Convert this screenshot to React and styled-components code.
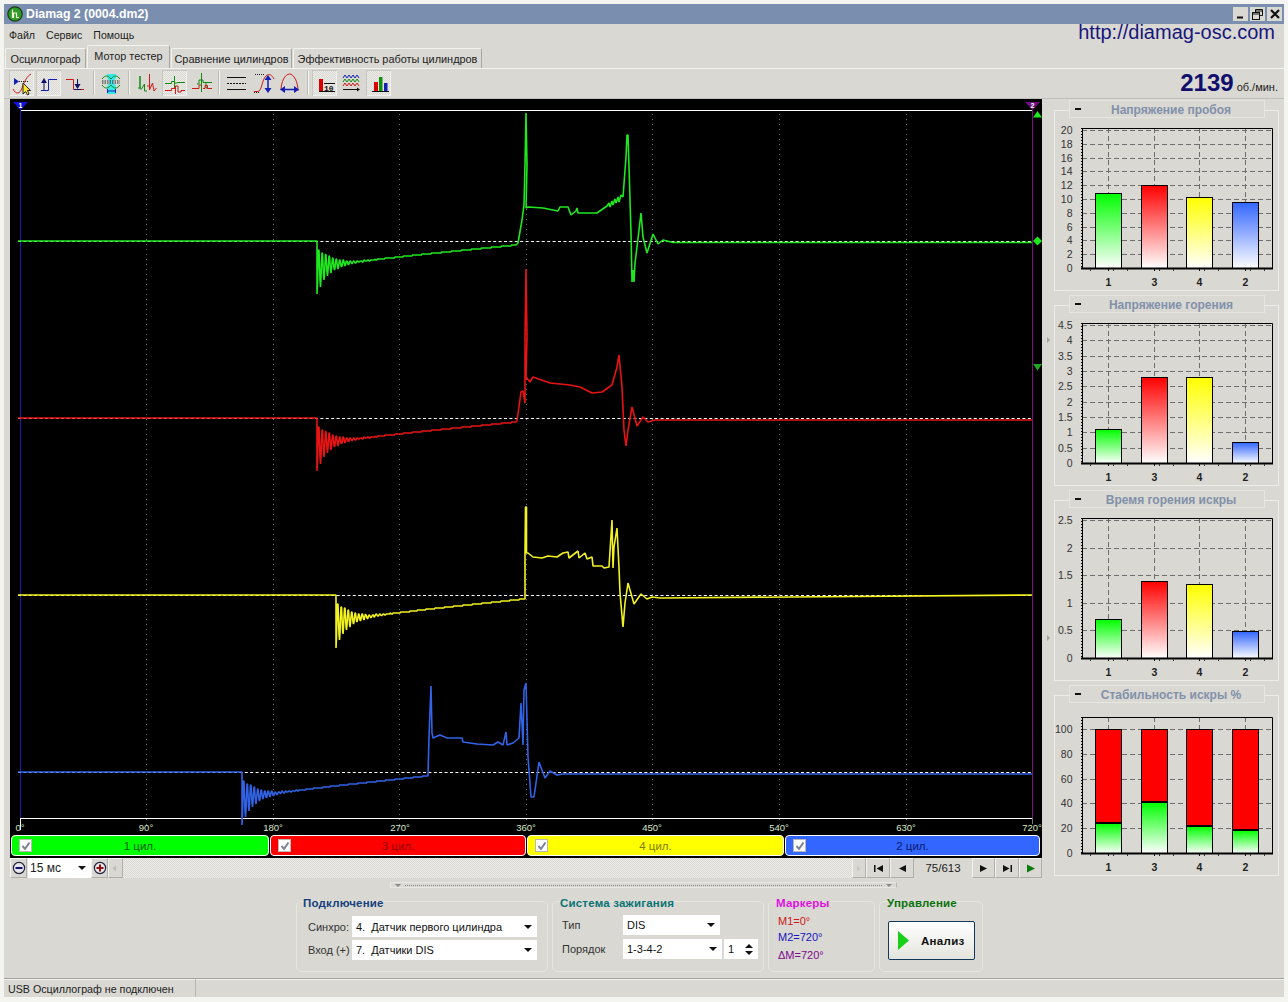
import { useId } from 'react';
import styled, { createGlobalStyle } from 'styled-components';

const GlobalStyle = createGlobalStyle`
  html, body { margin: 0; padding: 0; background: #f4f4f0; }
  body { font-family: "Liberation Sans", Arial, sans-serif; font-size: 11.5px; color: #222; }
`;

const PANEL = '#d9d8d3';

// ---------- data ----------
const CHANNELS = [
  {
    color: '#1fe81f', base: 241, start: 317, riseAt: 516,
    points: [[518,243],[522,220],[524,205],[525,165],[526,113],[527,165],[526,208],[528,207],[543,208],[558,211],[560,207],[568,207],[571,215],[576,211],[577,208],[578,213],[597,213],[607,206],[609,203],[610,207],[612,201],[613,205],[615,199],[616,203],[618,197],[619,202],[621,195],[623,197],[626,157],[627,135],[628,135],[629,167],[631,233],[632,282],[633,270],[634,282],[635,263],[637,247],[641,213],[643,237],[647,253],[653,234],[658,244],[663,240],[673,242.5],[1032,242.5]],
  },
  {
    color: '#e81414', base: 418, start: 317, riseAt: 516,
    points: [[517,421],[521,392],[523,391],[525,403],[525,337],[526,269],[527,337],[526,377],[530,382],[533,377],[550,383],[570,385],[580,387],[592,393],[602,392],[612,385],[617,367],[619,355],[622,387],[624,430],[626,446],[628,430],[632,407],[637,426],[643,417],[648,422],[655,420],[667,420],[1032,420]],
  },
  {
    color: '#f2f220', base: 595, start: 336, riseAt: 524,
    points: [[525,599],[525,553],[525.5,507],[526.5,507],[526.5,553],[528,553],[533,557],[542,558],[548,556],[557,557],[563,553],[568,552],[569,558],[578,551],[579,558],[585,553],[587,559],[592,557],[593,566],[602,566],[604,568],[609,567],[612,520],[613,568],[614,547],[617,528],[619,568],[620,593],[623,627],[625,603],[628,583],[634,604],[641,594],[647,599],[652,597],[660,598],[1032,595]],
  },
  {
    color: '#3263e6', base: 772, start: 242, riseAt: 427,
    points: [[428,776],[429,737],[431,686],[432,733],[433,738],[440,735],[447,738],[462,738],[463,742],[477,744],[493,745],[498,742],[503,745],[506,732],[507,745],[513,743],[519,738],[521,703],[523,745],[524,690],[526,683],[528,757],[531,797],[534,797],[539,762],[545,778],[550,771],[557,775],[563,774],[590,774],[1032,774]],
  },
];

const GRID_X = [146, 273, 399, 526, 652, 779, 906];
const DEGREES = [[20,'0°'],[146,'90°'],[273,'180°'],[400,'270°'],[526,'360°'],[652,'450°'],[779,'540°'],[906,'630°'],[1032,'720°']];

const CYLINDERS = [
  { label: '1 цил.', bg: '#00ff00', fg: '#0c5a0c', width: 259 },
  { label: '3 цил.', bg: '#ff0000', fg: '#960000', width: 257 },
  { label: '4 цил.', bg: '#ffff00', fg: '#7c7c00', width: 258 },
  { label: '2 цил.', bg: '#3366ff', fg: '#0a1a70', width: 256 },
];

const BAR_X = [41, 87, 132, 178];
const BAR_NAMES = ['1', '3', '4', '2'];
const BAR_COLORS = ['#00ff00', '#ff0000', '#ffff00', '#3366ff'];

const CHARTS = [
  { title: 'Напряжение пробоя', ticks: [0,2,4,6,8,10,12,14,16,18,20], top: 30, frameTop: 28, values: [10.9,12,10.3,9.5] },
  { title: 'Напряжение горения', ticks: [0,0.5,1,1.5,2,2.5,3,3.5,4,4.5], top: 30, frameTop: 28, values: [1.1,2.8,2.8,0.68] },
  { title: 'Время горения искры', ticks: [0,0.5,1,1.5,2,2.5], top: 30, frameTop: 28, values: [0.7,1.4,1.34,0.49] },
  { title: 'Стабильность искры %', ticks: [0,20,40,60,80,100], top: 44, frameTop: 32, values: [24,41,22,18.5], stacked: true },
];

// ---------- trace helpers ----------
const lerpOffset = (f) => {
  const keys = [[0,29],[0.05,24],[0.19,21],[0.5,14],[1,4]];
  for (let i = 1; i < keys.length; i++) {
    if (f <= keys[i][0]) {
      const [a, va] = keys[i - 1];
      const [b, vb] = keys[i];
      return va + ((f - a) / (b - a)) * (vb - va);
    }
  }
  return 4;
};

const tracePath = ({ base, start, riseAt, points }) => {
  let d = `M18 ${base} L${start} ${base}`;
  const len = riseAt - start;
  for (let t = 0; t <= len; t += 0.5) {
    const center = base + lerpOffset(t / len);
    const y = center + 24 * Math.exp(-t / 13) * Math.cos((2 * Math.PI * t) / 3.5);
    d += ` L${start + t} ${Math.round(y)}`;
  }
  points.forEach(([x, y]) => { d += ` L${x} ${y}`; });
  return d;
};

// ---------- layout ----------
const Window = styled.div`
  margin: 4px 0 0 4px;
  width: 1280px;
  height: 993px;
  background: ${PANEL};
  display: flex;
  flex-direction: column;
  overflow: hidden;
`;

const TitleBar = styled.div`
  height: 20px;
  flex: none;
  background: #7a8eb0;
  display: flex;
  align-items: center;
  padding: 0 2px 0 3px;
`;

const TitleText = styled.div`
  margin-left: 3px;
  flex: 1;
  color: #fff;
  font-weight: bold;
  font-size: 12.3px;
`;

const WinButton = styled.button`
  width: 15px;
  height: 14px;
  margin-left: 2px;
  padding: 0;
  border: none;
  background: #d9d8d3;
  display: flex;
  align-items: center;
  justify-content: center;
`;

const MenuBar = styled.div`
  height: 21px;
  flex: none;
  display: flex;
  align-items: center;
  padding-left: 5px;
  gap: 11px;
  position: relative;
`;

const MenuItem = styled.span`
  font-size: 10.6px;
  color: #222;
`;

const SiteLink = styled.div`
  margin-left: auto;
  margin-right: 9px;
  margin-top: -4px;
  font-size: 20px;
  color: #17177c;
`;

const TabRow = styled.div`
  height: 23px;
  flex: none;
  display: flex;
  align-items: flex-end;
  padding-left: 1px;
`;

const Tab = styled.div`
  height: ${(p) => (p.$active ? 23 : 20)}px;
  width: ${(p) => p.$width}px;
  box-sizing: border-box;
  margin-right: 1px;
  border-top: 1px solid #f2f2ee;
  border-left: 1px solid #f2f2ee;
  border-right: 1px solid #a8a8a2;
  border-radius: 2px 2px 0 0;
  display: flex;
  align-items: center;
  justify-content: center;
  font-size: 10.9px;
  padding-bottom: ${(p) => (p.$active ? 3 : 0)}px;
  color: #222;
`;

const Toolbar = styled.div`
  height: 31px;
  flex: none;
  box-sizing: border-box;
  border-top: 1px solid #f2f2ee;
  border-bottom: 1px solid #c0c0ba;
  display: flex;
  align-items: center;
  padding: 0 0 1px 5px;
`;

const ToolButton = styled.div`
  width: 25px;
  height: 26px;
  margin-right: 2px;
  flex: none;
  background: ${(p) => (p.$pressed ? 'repeating-conic-gradient(#ecece8 0 25%, #d9d8d3 0 50%) 0 0 / 2px 2px' : 'transparent')};
  box-shadow: ${(p) => (p.$pressed ? 'inset 1px 1px 0 #c8c8c2, inset -1px -1px 0 #f0f0ec' : 'none')};
`;

const ToolSep = styled.div`
  width: 2px;
  height: 24px;
  margin: 0 ${(p) => p.$after || 4}px 0 ${(p) => p.$before || 4}px;
  background: linear-gradient(to right, #bcbcb6 50%, #f4f4f0 50%);
  flex: none;
`;

const Rpm = styled.div`
  margin-left: auto;
  margin-right: 6px;
  display: flex;
  align-items: baseline;
  gap: 3px;
`;

const RpmValue = styled.span`
  font-size: 24px;
  font-weight: bold;
  color: #10106c;
`;

const RpmUnit = styled.span`
  font-size: 11px;
  color: #222;
`;

const Main = styled.div`
  flex: none;
  height: 781px;
  display: flex;
  padding-left: 6px;
  align-items: flex-start;
`;

const LeftColumn = styled.div`
  width: 1032px;
  flex: none;
`;

const ScopeBox = styled.div`
  background: #000;
  height: 759px;
  display: flex;
  flex-direction: column;
`;

const ScopeSvg = styled.svg`
  display: block;
  flex: none;
  font-family: "Liberation Sans", Arial, sans-serif;
`;

const Legend = styled.div`
  display: flex;
  padding-left: 1px;
  height: 21px;
`;

const LegendBar = styled.div`
  width: ${(p) => p.$width - 1}px;
  margin-right: 1px;
  box-sizing: border-box;
  background: ${(p) => p.$bg};
  color: ${(p) => p.$fg};
  border: 1px solid #fff;
  border-radius: 4px;
  display: flex;
  align-items: center;
  padding-left: 7px;
  font-size: 11.5px;
`;

const CheckBox = styled.div`
  width: 13px;
  height: 13px;
  flex: none;
  background: #fff;
  border: 1px solid #b8b8b8;
  box-sizing: border-box;
  display: flex;
  align-items: center;
  justify-content: center;
`;

const LegendLabel = styled.span`
  flex: 1;
  text-align: center;
  padding-right: 20px;
`;

const ControlRow = styled.div`
  height: 20px;
  display: flex;
  align-items: stretch;
  background: repeating-conic-gradient(#ecece8 0 25%, #d9d8d3 0 50%) 0 0 / 2px 2px;
`;

const NavButton = styled.div`
  width: ${(p) => p.$width}px;
  margin-left: ${(p) => p.$gap || 0}px;
  flex: none;
  box-sizing: border-box;
  background: ${PANEL};
  border-top: 1px solid #f2f2ee;
  border-left: 1px solid #f2f2ee;
  border-right: 1px solid #b0b0aa;
  border-bottom: 1px solid #b0b0aa;
  display: flex;
  align-items: center;
  justify-content: center;
`;

const Hatch = styled.div`
  flex: 1;
`;

const ZoomCombo = styled.div`
  width: 63px;
  margin-left: 1px;
  background: #fff;
  display: flex;
  align-items: center;
  justify-content: space-between;
  padding: 0 5px 0 2px;
  box-sizing: border-box;
  font-size: 12px;
`;

const Counter = styled.div`
  width: 58px;
  background: ${PANEL};
  display: flex;
  align-items: center;
  justify-content: center;
  font-size: 11.5px;
`;

const Arrow = styled.i`
  display: block;
  width: 0;
  height: 0;
  border-left: 4px solid transparent;
  border-right: 4px solid transparent;
  border-top: 4px solid #111;
`;

const Gripper = styled.div`
  width: 12px;
  flex: none;
  align-self: stretch;
  display: flex;
  flex-direction: column;
  align-items: center;
  padding-top: 238px;
  gap: 292px;
`;

const GripMark = styled.i`
  display: block;
  width: 0;
  height: 0;
  border-top: 3px solid transparent;
  border-bottom: 3px solid transparent;
  border-left: 3px solid #a4a4a0;
`;

const RightColumn = styled.div`
  width: 225px;
  flex: none;
  padding-top: 1px;
`;

const ChartPanel = styled.div`
  height: 195px;
  box-sizing: border-box;
  display: flex;
  flex-direction: column;
`;

const ChartHeader = styled.div`
  width: 196px;
  height: 18px;
  margin: 0 auto;
  box-sizing: border-box;
  background: ${PANEL};
  border: 1px solid #e6e6e1;
  position: relative;
  z-index: 1;
  flex: none;
  display: flex;
  align-items: center;
  padding-left: 5px;
`;

const Collapse = styled.i`
  display: block;
  width: 6px;
  height: 2px;
  background: #111;
  flex: none;
`;

const ChartTitle = styled.span`
  flex: 1;
  text-align: center;
  font-size: 12px;
  font-weight: bold;
  color: #8291aa;
  padding: 1px 2px 0 0;
`;

const ChartFrame = styled.div`
  margin-top: -8px;
  height: 181px;
  box-sizing: border-box;
  border: 1px solid #ecece8;
  padding-top: 9px;
`;

const ChartSvg = styled.svg`
  display: block;
  font-family: "Liberation Sans", Arial, sans-serif;
`;

const Splitter = styled.div`
  height: 15px;
  flex: none;
  display: flex;
  justify-content: flex-start;
  padding: 2px 0 0 386px;
  box-sizing: border-box;
`;

const SplitterBar = styled.div`
  width: 507px;
  height: 6px;
  box-sizing: border-box;
  border: 1px solid #e8e8e4;
  border-right-color: #b8b8b2;
  display: flex;
  align-items: center;
  gap: 4px;
  padding: 0 4px;
`;

const SplitterDots = styled.i`
  flex: 1;
  display: block;
  border-top: 1px dotted #8a8a86;
`;

const SplitterTip = styled.i`
  display: block;
  width: 0;
  height: 0;
  border-left: 3px solid transparent;
  border-right: 3px solid transparent;
  border-top: 3px solid #888;
`;

const GroupRow = styled.div`
  flex: none;
  height: 83px;
  display: flex;
  gap: 4px;
  padding: 6px 0 0 292px;
  box-sizing: border-box;
`;

const Group = styled.div`
  width: ${(p) => p.$width}px;
  height: 71px;
  flex: none;
  box-sizing: border-box;
  border: 1px solid #e6e6e1;
  border-radius: 5px;
  padding: 0 0 0 ${(p) => p.$pad}px;
`;

const GroupTitle = styled.div`
  margin: -6px 0 0 ${(p) => p.$shift || 0}px;
  height: 14px;
  line-height: 14px;
  font-size: 11.5px;
  font-weight: bold;
  letter-spacing: 0.2px;
  color: ${(p) => p.$color};
`;

const FormRow = styled.div`
  display: flex;
  align-items: center;
  margin-top: ${(p) => p.$top}px;
`;

const FormLabel = styled.span`
  width: ${(p) => p.$width}px;
  margin-left: ${(p) => p.$indent || 0}px;
  flex: none;
  font-size: 11px;
  color: #333;
  white-space: nowrap;
`;

const Combo = styled.div`
  width: ${(p) => p.$width}px;
  height: ${(p) => p.$height || 20}px;
  flex: none;
  box-sizing: border-box;
  background: #fff;
  display: flex;
  align-items: center;
  justify-content: space-between;
  padding: 0 5px 0 4px;
  font-size: 11px;
  color: #111;
  white-space: pre;
`;

const Spinner = styled(Combo)`
  margin-left: 2px;
`;

const SpinArrows = styled.span`
  display: flex;
  flex-direction: column;
  gap: 3px;
`;

const ArrowUp = styled(Arrow)`
  border-top: none;
  border-bottom: 4px solid #111;
`;

const MarkerLine = styled.div`
  margin: ${(p) => p.$top}px 0 0 0;
  height: 13px;
  line-height: 13px;
  font-size: 11px;
  color: ${(p) => p.$color};
`;

const AnalyzeButton = styled.button`
  width: 87px;
  height: 39px;
  margin: 11px 0 0 8px;
  box-sizing: border-box;
  border: 1px solid #14385c;
  border-radius: 2px;
  background: linear-gradient(to bottom, #ffffff, #e4e4de);
  display: flex;
  align-items: center;
  gap: 12px;
  padding: 0 0 0 9px;
  font-family: inherit;
  font-size: 11.5px;
  font-weight: bold;
  letter-spacing: 0.3px;
  color: #111;
`;

const StatusBar = styled.div`
  flex: none;
  height: 19px;
  margin-top: 0;
  border-top: 1px solid #a6a6a0;
  box-shadow: inset 0 1px 0 #f0f0ec;
  display: flex;
  align-items: center;
  padding-left: 4px;
  font-size: 10.7px;
  color: #222;
`;

const StatusCell = styled.div`
  width: 187px;
  height: 100%;
  display: flex;
  align-items: center;
  border-right: 1px solid #b8b8b2;
`;

// ---------- drawings ----------
const AppIcon = () => (
  <svg width="16" height="16" viewBox="0 0 16 16">
    <circle cx="8" cy="8" r="7.2" fill="#2f9a2a" stroke="#173a14" strokeWidth="1.2" />
    <path d="M5.5 3.5 V11.5 H6.5 V7 H9.5 V11.5 H12" fill="none" stroke="#f4f4d0" strokeWidth="1.2" />
  </svg>
);

const Ico = ({ children }) => (
  <svg width="25" height="26" viewBox="0 0 25 26" fill="none" strokeWidth="1">{children}</svg>
);

const BLUE = '#1420b4';
const NAVY = '#10106c';
const RED = '#d01818';
const GREEN = '#128a12';

const ToolIcons = [
  <Ico key="1">
    <path d="M5 8 L10 11.5 L5 15 Z" fill={BLUE} />
    <path d="M10 11.5 H20" stroke="#222" strokeDasharray="1 1" />
    <path d="M4 19 C7 25 11 24 13 18 C15 12 18 6 22 4" stroke={RED} />
    <path d="M14 13 V24 L16.5 21.5 L18.5 25 L20 24 L18.5 20.5 L21.5 20.5 Z" fill="#ffe820" stroke="#222" />
  </Ico>,
  <Ico key="2">
    <path d="M5 20.5 H12.5 V9.5 H21" stroke={BLUE} />
    <path d="M8 20 V12" stroke={NAVY} />
    <path d="M5 13 L8 8 L11 13 Z" fill={NAVY} />
  </Ico>,
  <Ico key="3">
    <path d="M3 9.5 H10.5 V19.5 H21" stroke={RED} />
    <path d="M14.5 9 V14" stroke={NAVY} />
    <path d="M11.5 14 L14.5 19 L17.5 14 Z" fill={NAVY} />
    <path d="M11 19.5 H18" stroke={NAVY} />
  </Ico>,
  <Ico key="4">
    <path d="M8 4 H17 L17 8 L14 12 L17 16 V24 H8 V16 L11 12 L8 8 Z" fill="#38e8e8" />
    <path d="M3 9 C6 5 9 5 12 9 C15 5 18 5 21 9" stroke={GREEN} />
    <path d="M3 15 C6 19 9 19 12 15 C15 19 18 19 21 15" stroke={GREEN} />
    <path d="M3 11 H21 M3 13 H21" stroke="#222" strokeDasharray="1.5 1" />
    <path d="M8.5 21 H16.5 M8.5 19 V23 M16.5 19 V23" stroke={BLUE} />
  </Ico>,
  <Ico key="5">
    <path d="M3 18 H5 V6 V19 L6.5 19 L9.5 14 V21 H12" stroke={GREEN} />
    <path d="M12 16 H14.5 V4 V20 L17.5 13 L19 21 L21.5 18" stroke={RED} />
  </Ico>,
  <Ico key="6">
    <path d="M3 13.5 H9.5 V11.5 H12.5 V6 V18 V13 H15.5 V12.5 H23" stroke={GREEN} />
    <path d="M3 20.5 H9.5 V18.5 H13.5 V24 V16 H16 V22 H19 V20.5 H23" stroke={RED} />
  </Ico>,
  <Ico key="7">
    <path d="M3 18.5 H10 V15 H12" stroke={RED} />
    <path d="M12.5 3 V22" stroke={GREEN} />
    <path d="M8 14 H10 V10 H14 V12.5 H23 M17 12.5 V18 H19" stroke={GREEN} />
    <path d="M14 18.5 H16 V15.5 H18.5 V18.5 H23" stroke={RED} />
  </Ico>,
  <Ico key="8">
    <path d="M3 7.5 H22 M3 19.5 H22" stroke="#111" />
    <path d="M3 13.5 H22" stroke="#111" strokeDasharray="2 1" />
  </Ico>,
  <Ico key="9">
    <path d="M3 21.5 H7 C11 21 11 9 15 6 C18 3 21 5 23 9" stroke={RED} />
    <path d="M4 4.5 H14 M3 22.5 H9" stroke="#222" strokeDasharray="1 1" />
    <path d="M17 9 V19" stroke={BLUE} strokeWidth="1.5" />
    <path d="M13.5 10 L17 5 L20.5 10 Z M13.5 18 L17 23 L20.5 18 Z" fill={BLUE} />
  </Ico>,
  <Ico key="10">
    <path d="M3 20 C3 12 7 4 11.5 4 C16 4 20 12 20 21" stroke={RED} />
    <path d="M5 19.5 H18" stroke={BLUE} strokeWidth="1.5" />
    <path d="M7 16 L2 19.5 L7 23 Z M16 16 L21 19.5 L16 23 Z" fill={BLUE} />
  </Ico>,
  <Ico key="11">
    <rect x="7" y="9" width="4" height="12" fill="#d80000" />
    <path d="M7 21.5 H23 M12 13.5 H23" stroke="#111" />
    <text x="12" y="20.5" fontSize="8" fontWeight="bold" fill="#111" fontFamily="Liberation Mono, monospace">10</text>
  </Ico>,
  <Ico key="12">
    <path d="M4 8 L6 5 L8 8 L10 5 L12 8 L14 5 L16 8 L18 5 L20 8" stroke={BLUE} />
    <path d="M4 12 L6 9 L8 12 L10 9 L12 12 L14 9 L16 12 L18 9 L20 12" stroke={GREEN} />
    <path d="M4 16 L6 13 L8 16 L10 13 L12 16 L14 13 L16 16 L18 13 L20 16" stroke={RED} />
    <path d="M4 19.5 H18" stroke="#111" />
    <path d="M18 17.5 L21 19.5 L18 21.5 Z" fill="#111" />
  </Ico>,
  <Ico key="13">
    <rect x="8" y="12" width="4" height="9" fill="#d80000" />
    <rect x="13" y="7" width="3.5" height="14" fill="#109010" />
    <rect x="18" y="13" width="3.5" height="8" fill={BLUE} />
    <path d="M6 21.5 H23" stroke="#111" />
  </Ico>,
];

const NavGlyph = ({ kind }) => {
  const paths = {
    first: 'M1 1 H2.5 V8 H1 Z M10 1 V8 L3.5 4.5 Z',
    prev: 'M9 1 V8 L2 4.5 Z',
    next: 'M2 1 V8 L9 4.5 Z',
    last: 'M1 1 V8 L7.5 4.5 Z M8.5 1 H10 V8 H8.5 Z',
    play: 'M2 0.5 V8.5 L10 4.5 Z',
    faint: 'M6 1.5 V7.5 L2.5 4.5 Z',
    faintNext: 'M3 1.5 V7.5 L6.5 4.5 Z',
  };
  const fills = { play: '#0a7a0a', faint: '#bdbdb8', faintNext: '#c8c8c2' };
  return (
    <svg width="11" height="9" viewBox="0 0 11 9">
      <path d={paths[kind]} fill={fills[kind] || '#111'} />
    </svg>
  );
};

const RoundIcon = ({ plus }) => (
  <svg width="14" height="14" viewBox="0 0 14 14">
    <circle cx="7" cy="7" r="5.6" fill="#e6e6ec" stroke="#222238" strokeWidth="1.2" />
    <path d={plus ? 'M3.5 7 H10.5 M7 3.5 V10.5' : 'M3.5 7 H10.5'} stroke={plus ? '#8c1010' : '#10106c'} strokeWidth="2" />
  </svg>
);

const Check = () => (
  <svg width="10" height="10" viewBox="0 0 10 10">
    <path d="M1.5 5 L4 7.8 L8.5 1.5" fill="none" stroke="#7a8496" strokeWidth="2" />
  </svg>
);

const Oscilloscope = () => (
  <ScopeSvg width="1032" height="736" viewBox="10 99 1032 736">
    {GRID_X.map((x) => (
      <path key={x} d={`M${x}.5 114 V826`} stroke="#6c6c6c" strokeDasharray="1 4" />
    ))}
    <path d="M20 110.5 H1032 M20 818.5 H1032" stroke="#fff" strokeWidth="1" />
    <path d="M20.5 102 V818" stroke="#1a1ab4" />
    <path d="M20.5 818 V830" stroke="#fff" />
    <path d="M1032.5 102 V818" stroke="#80107c" />
    <path d="M1032.5 818 V824" stroke="#777" />
    {CHANNELS.map((c) => (
      <g key={c.color}>
        <path d={`M18 ${c.base}.5 H1032`} stroke="#fff" strokeDasharray="3 2.4" />
        <path d={tracePath(c)} fill="none" stroke={c.color} strokeWidth="1.6" strokeLinejoin="bevel" />
      </g>
    ))}
    <path d="M13 102 H28 L20.5 110 Z" fill="#1414d8" />
    <text x="20.5" y="107.5" fontSize="7" fontWeight="bold" fill="#fff" textAnchor="middle">1</text>
    <path d="M1025 102 H1040 L1032.5 110 Z" fill="#70107c" />
    <text x="1032.5" y="107.5" fontSize="7" fontWeight="bold" fill="#fff" textAnchor="middle">2</text>
    <path d="M1037.5 111 L1042 117.5 H1033 Z" fill="#1fe81f" />
    <path d="M1037.5 236.5 L1042 241 L1037.5 245.5 L1033 241 Z" fill="#1fe81f" />
    <path d="M1037.5 370.5 L1042 364 H1033 Z" fill="#1fa81f" />
    {DEGREES.map(([x, label]) => (
      <text key={label} x={x} y="831" fontSize="9.5" fill="#d8e8c8" textAnchor="middle">{label}</text>
    ))}
  </ScopeSvg>
);

const BarChart = ({ ticks, top, frameTop, values, stacked }) => {
  const id = useId();
  const bottom = 168;
  const left = 28;
  const right = 218;
  const scale = (bottom - top) / ticks[ticks.length - 1];
  return (
    <ChartSvg width="223" height="170" viewBox="1 20 223 170">
      <defs>
        {BAR_COLORS.map((c, i) => (
          <linearGradient key={c} id={`${id}-${i}`} x1="0" y1="0" x2="0" y2="1">
            <stop offset="0" stopColor={c} />
            <stop offset="1" stopColor="#fff" />
          </linearGradient>
        ))}
      </defs>
      {ticks.slice(1).map((t) => {
        const y = Math.round(bottom - t * scale) + 0.5;
        return <path key={t} d={`M${left} ${y} H${right}`} stroke="#6e6e6e" strokeDasharray="5 3" />;
      })}
      {BAR_X.map((x) => (
        <path key={x} d={`M${x + 13.5} ${frameTop} V${bottom}`} stroke="#6e6e6e" strokeDasharray="5 3" />
      ))}
      {values.map((v, i) => {
        const x = BAR_X[i];
        const y = Math.round(bottom - v * scale);
        return (
          <g key={BAR_NAMES[i]}>
            {stacked && <rect x={x + 0.5} y={top + 0.5} width="26" height={y - top} fill="#ff0000" stroke="#000" />}
            <rect
              x={x + 0.5}
              y={y + 0.5}
              width="26"
              height={bottom - y}
              fill={`url(#${id}-${stacked ? 0 : i})`}
              stroke="#000"
              strokeWidth="1"
            />
            {stacked && <path d={`M${x} ${y} H${x + 27}`} stroke="#000" strokeWidth="2" />}
            <path d={`M${x + 13.5} ${bottom} v3`} stroke="#111" />
            <text x={x + 13.5} y="186" fontSize="10.5" fontWeight="bold" fill="#222" textAnchor="middle">{BAR_NAMES[i]}</text>
          </g>
        );
      })}
      <path d={`M${left} ${frameTop}.5 H${right}.5 V${bottom}`} fill="none" stroke="#000" />
      <path d={`M${left}.5 ${frameTop} V${bottom}`} stroke="#000" />
      <path d={`M${left - 1}.5 ${frameTop} V${bottom}`} stroke="#000" strokeDasharray="1 2" />
      <path d={`M${left - 1} ${bottom + 0.5} H${right + 1}`} stroke="#000" strokeWidth="2" />
      {[36, 59, 73, 105, 119, 150, 164, 196, 210].map((x) => (
        <path key={x} d={`M${x}.5 ${bottom + 1} v2`} stroke="#333" />
      ))}
      {ticks.map((t) => (
        <text key={t} x="18.5" y={Math.round(bottom - t * scale) + 3.8} fontSize="10.5" fill="#333" textAnchor="end">{t}</text>
      ))}
    </ChartSvg>
  );
};

const App = () => (
  <>
    <GlobalStyle />
    <Window>
      <TitleBar>
        <AppIcon />
        <TitleText>Diamag 2 (0004.dm2)</TitleText>
        <WinButton>
          <svg width="9" height="9" viewBox="0 0 9 9"><path d="M1 7.5 H7" stroke="#111" strokeWidth="2" /></svg>
        </WinButton>
        <WinButton>
          <svg width="11" height="11" viewBox="0 0 11 11" fill="none" stroke="#111">
            <path d="M3.5 3 V0.5 H10.5 V6.5 H8" />
            <path d="M3.5 2 H10.5" />
            <rect x="0.5" y="3.5" width="7" height="7" />
            <path d="M0.5 5 H7.5" />
          </svg>
        </WinButton>
        <WinButton>
          <svg width="10" height="10" viewBox="0 0 10 10"><path d="M1 1 L9 9 M9 1 L1 9" stroke="#111" strokeWidth="2.2" /></svg>
        </WinButton>
      </TitleBar>
      <MenuBar>
        <MenuItem>Файл</MenuItem>
        <MenuItem>Сервис</MenuItem>
        <MenuItem>Помощь</MenuItem>
        <SiteLink>http://diamag-osc.com</SiteLink>
      </MenuBar>
      <TabRow>
        <Tab $width={81}>Осциллограф</Tab>
        <Tab $width={83} $active>Мотор тестер</Tab>
        <Tab $width={121}>Сравнение цилиндров</Tab>
        <Tab $width={189}>Эффективность работы цилиндров</Tab>
      </TabRow>
      <Toolbar>
        <ToolButton $pressed>{ToolIcons[0]}</ToolButton>
        <ToolButton $pressed>{ToolIcons[1]}</ToolButton>
        <ToolButton>{ToolIcons[2]}</ToolButton>
        <ToolSep $before={3} />
        <ToolButton>{ToolIcons[3]}</ToolButton>
        <ToolSep $before={2} $after={5} />
        <ToolButton>{ToolIcons[4]}</ToolButton>
        <ToolButton $pressed>{ToolIcons[5]}</ToolButton>
        <ToolButton>{ToolIcons[6]}</ToolButton>
        <ToolSep $before={2} />
        <ToolButton>{ToolIcons[7]}</ToolButton>
        <ToolButton>{ToolIcons[8]}</ToolButton>
        <ToolButton>{ToolIcons[9]}</ToolButton>
        <ToolSep $before={2} $after={3} />
        <ToolButton $pressed>{ToolIcons[10]}</ToolButton>
        <ToolButton>{ToolIcons[11]}</ToolButton>
        <ToolButton $pressed>{ToolIcons[12]}</ToolButton>
        <Rpm>
          <RpmValue>2139</RpmValue>
          <RpmUnit>об./мин.</RpmUnit>
        </Rpm>
      </Toolbar>
      <Main>
        <LeftColumn>
          <ScopeBox>
            <Oscilloscope />
            <Legend>
              {CYLINDERS.map((c) => (
                <LegendBar key={c.label} $width={c.width} $bg={c.bg} $fg={c.fg}>
                  <CheckBox><Check /></CheckBox>
                  <LegendLabel>{c.label}</LegendLabel>
                </LegendBar>
              ))}
            </Legend>
          </ScopeBox>
          <ControlRow>
            <NavButton $width={17}><RoundIcon /></NavButton>
            <ZoomCombo>15 мс<Arrow /></ZoomCombo>
            <NavButton $width={17}><RoundIcon plus /></NavButton>
            <NavButton $width={15}><NavGlyph kind="faint" /></NavButton>
            <Hatch />
            <NavButton $width={14}><NavGlyph kind="faintNext" /></NavButton>
            <NavButton $width={24}><NavGlyph kind="first" /></NavButton>
            <NavButton $width={24}><NavGlyph kind="prev" /></NavButton>
            <Counter>75/613</Counter>
            <NavButton $width={23}><NavGlyph kind="next" /></NavButton>
            <NavButton $width={24}><NavGlyph kind="last" /></NavButton>
            <NavButton $width={23}><NavGlyph kind="play" /></NavButton>
          </ControlRow>
        </LeftColumn>
        <Gripper>
          <GripMark />
          <GripMark />
        </Gripper>
        <RightColumn>
          {CHARTS.map((c) => (
            <ChartPanel key={c.title}>
              <ChartHeader>
                <Collapse />
                <ChartTitle>{c.title}</ChartTitle>
              </ChartHeader>
              <ChartFrame>
                <BarChart {...c} />
              </ChartFrame>
            </ChartPanel>
          ))}
        </RightColumn>
      </Main>
      <Splitter>
        <SplitterBar>
          <SplitterTip />
          <SplitterDots />
          <SplitterTip />
        </SplitterBar>
      </Splitter>
      <GroupRow>
        <Group $width={252} $pad={6}>
          <GroupTitle $color="#16407c">Подключение</GroupTitle>
          <FormRow $top={6}>
            <FormLabel $width={44} $indent={5}>Синхро:</FormLabel>
            <Combo $width={185} $height={21}>{'4.  Датчик первого цилиндра'}<Arrow /></Combo>
          </FormRow>
          <FormRow $top={3}>
            <FormLabel $width={44} $indent={5}>Вход (+)</FormLabel>
            <Combo $width={185} $height={20}>{'7.  Датчики DIS'}<Arrow /></Combo>
          </FormRow>
        </Group>
        <Group $width={212} $pad={9}>
          <GroupTitle $color="#0a7474" $shift={-2}>Система зажигания</GroupTitle>
          <FormRow $top={5}>
            <FormLabel $width={61}>Тип</FormLabel>
            <Combo $width={97}>DIS<Arrow /></Combo>
          </FormRow>
          <FormRow $top={4}>
            <FormLabel $width={61}>Порядок</FormLabel>
            <Combo $width={99}>1-3-4-2<Arrow /></Combo>
            <Spinner $width={34}>
              1
              <SpinArrows><ArrowUp /><Arrow /></SpinArrows>
            </Spinner>
          </FormRow>
        </Group>
        <Group $width={107} $pad={9}>
          <GroupTitle $color="#e010e0" $shift={-2}>Маркеры</GroupTitle>
          <MarkerLine $top={5} $color="#d01818">M1=0°</MarkerLine>
          <MarkerLine $top={3} $color="#1414c0">M2=720°</MarkerLine>
          <MarkerLine $top={5} $color="#800a8c">ΔM=720°</MarkerLine>
        </Group>
        <Group $width={104} $pad={0}>
          <GroupTitle $color="#0a720a" $shift={7}>Управление</GroupTitle>
          <AnalyzeButton>
            <svg width="11" height="19" viewBox="0 0 11 19"><path d="M0 0 L11 9.5 L0 19 Z" fill="#18d018" /></svg>
            Анализ
          </AnalyzeButton>
        </Group>
      </GroupRow>
      <StatusBar>
        <StatusCell>USB Осциллограф не подключен</StatusCell>
      </StatusBar>
    </Window>
  </>
);

export default App;
